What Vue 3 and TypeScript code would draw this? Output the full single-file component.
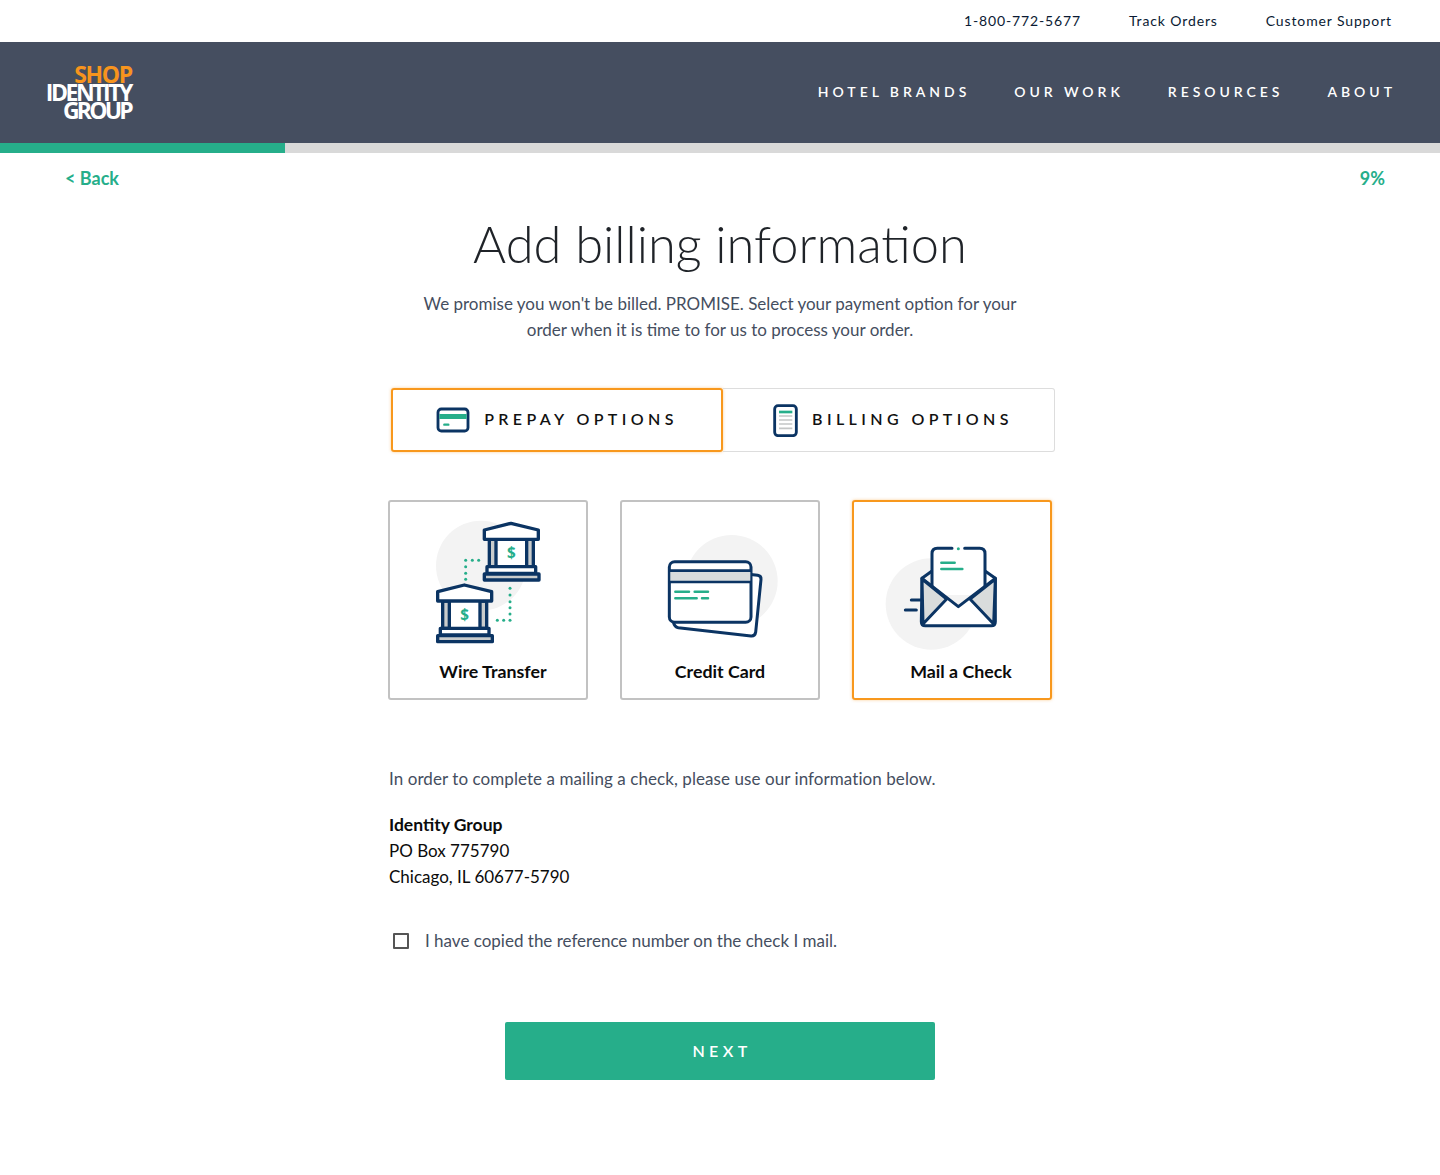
<script setup lang="ts">
const topLinks: string[] = ['1-800-772-5677', 'Track Orders', 'Customer Support']
const navLinks: string[] = ['HOTEL BRANDS', 'OUR WORK', 'RESOURCES', 'ABOUT']
</script>

<template>
  <div class="page">
    <div class="topbar">
      <a v-for="l in topLinks" :key="l" class="toplink">{{ l }}</a>
    </div>
    <header class="header">
      <div class="logo">
        <span class="l1">SHOP</span>
        <span class="l2">IDENTITY</span>
        <span class="l3">GROUP</span>
      </div>
      <nav class="nav">
        <a v-for="l in navLinks" :key="l" class="navlink">{{ l }}</a>
      </nav>
    </header>
    <div class="progress"><div class="progress-fill"></div></div>
    <div class="backrow">
      <a class="back">&lt; Back</a>
      <span class="pct">9%</span>
    </div>
    <main class="main">
      <h1 class="title">Add billing information</h1>
      <p class="lead">We promise you won't be billed. PROMISE. Select your payment option for your<br />order when it is time to for us to process your order.</p>

      <div class="tabs">
        <div class="tab active">
          <svg class="tabicon" width="34" height="26" viewBox="150 81 102 78">
            <rect x="156" y="87" width="90" height="66" rx="10" fill="#fff" stroke="#0b3463" stroke-width="8.5" />
            <rect x="160" y="102" width="82" height="15" fill="#26ae8a" />
            <path d="M175 134H187" stroke="#26ae8a" stroke-width="7" stroke-linecap="round" />
          </svg>
          <span class="tablabel">PREPAY OPTIONS</span>
        </div>
        <div class="tab second">
          <svg class="tabicon" width="25" height="33" viewBox="157 70 75 99">
            <rect x="162" y="75" width="65" height="90" rx="10" fill="#fff" stroke="#0b3463" stroke-width="8.5" />
            <path d="M175 94H215" stroke="#26ae8a" stroke-width="8" />
            <path d="M175 106H215M175 118H215M175 130H215M175 143H215" stroke="#c4c6c6" stroke-width="5" />
          </svg>
          <span class="tablabel">BILLING OPTIONS</span>
        </div>
      </div>

      <div class="cards">
        <div class="card">
          <svg class="cardart" viewBox="15 21 588 450">
            <circle cx="288" cy="212" r="135" fill="#f3f3f3" />
            <g fill="#26ae8a">
              <circle cx="242" cy="196" r="4.5" /><circle cx="262" cy="196" r="4.5" /><circle cx="281" cy="196" r="4.5" />
              <circle cx="242" cy="215" r="4.5" /><circle cx="242" cy="235" r="4.5" /><circle cx="242" cy="253" r="4.5" />
              <circle cx="375" cy="280" r="4.5" /><circle cx="375" cy="300" r="4.5" /><circle cx="375" cy="320" r="4.5" />
              <circle cx="375" cy="338" r="4.5" /><circle cx="375" cy="357" r="4.5" /><circle cx="375" cy="376" r="4.5" />
              <circle cx="356" cy="376" r="4.5" /><circle cx="337" cy="376" r="4.5" />
            </g>
            <g v-for="(t, i) in ['', 'translate(-140 185)']" :key="i" :transform="t" stroke="#0b3463" stroke-width="10" stroke-linejoin="round">
              <rect x="335" y="133" width="90" height="82" fill="#fff" stroke="none" />
              <rect x="313" y="133" width="20" height="82" fill="#c9cccc" />
              <rect x="425" y="133" width="20" height="82" fill="#c9cccc" />
              <path d="M298 105L378 85L460 105V133H298Z" fill="#fff" />
              <rect x="306" y="215" width="146" height="20" fill="#fff" />
              <rect x="298" y="237" width="164" height="18" fill="#c9cccc" />
              <text x="379" y="190" class="dollar">$</text>
            </g>
          </svg>
          <span class="cardlabel wire">Wire Transfer</span>
        </div>

        <div class="card">
          <svg class="cardart" viewBox="21 21 588 450">
            <circle cx="350" cy="258" r="138" fill="#f3f3f3" />
            <path d="M400 238L428 241Q439 243 438 253L422 412Q420 424 408 423L190 398Q178 396 175 380Z" fill="#fff" stroke="#0b3463" stroke-width="9" stroke-linejoin="round" />
            <rect x="163" y="200" width="245" height="182" rx="16" fill="#fff" stroke="#0b3463" stroke-width="9" />
            <rect x="166" y="228" width="240" height="32" fill="#d9dcdc" />
            <path d="M163 227H408M163 261H408" stroke="#0b3463" stroke-width="8" />
            <path d="M181 290H222M239 290H279M181 310H245M261 310H279" stroke="#26ae8a" stroke-width="7.5" stroke-linecap="round" />
          </svg>
          <span class="cardlabel">Credit Card</span>
        </div>

        <div class="card selected">
          <svg class="cardart" viewBox="18 21 588 450">
            <circle cx="250" cy="327" r="137" fill="#f3f3f3" />
            <g stroke="#0b3463" stroke-width="9" stroke-linecap="round" stroke-linejoin="round" fill="none">
              <path d="M252 228L222 250M411 228L442 250" />
              <path d="M252 300V176Q252 160 268 160H411V300Z" fill="#fff" stroke="none" />
              <path d="M252 275V176Q252 160 268 160H312M350 160H395Q411 160 411 176V275" />
              <path d="M222 250L331 335L442 250V380Q442 392 430 392H232Q220 392 220 380Z" fill="#fff" />
              <path d="M222 252L296 312L225 387Z" fill="#d9dcdc" />
              <path d="M442 252L366 312L437 387Z" fill="#d9dcdc" />
              <path d="M190 315H218M172 345H205" />
            </g>
            <circle cx="331" cy="161" r="4.5" fill="#26ae8a" />
            <path d="M280 203H320M280 222H343" stroke="#26ae8a" stroke-width="7.5" stroke-linecap="round" />
          </svg>
          <span class="cardlabel mail">Mail a Check</span>
        </div>
      </div>

      <p class="info">In order to complete a mailing a check, please use our information below.</p>
      <address class="address">
        <strong>Identity Group</strong><br />PO Box 775790<br />Chicago, IL 60677-5790
      </address>
      <label class="check">
        <span class="box"></span>
        <span>I have copied the reference number on the check I mail.</span>
      </label>
      <button class="next" type="button">NEXT</button>
    </main>
  </div>
</template>

<style>
html, body { margin: 0; background: #fff; }
</style>

<style scoped>
.page {
  min-height: 1175px;
  font-family: "Lato", "Noto Sans", sans-serif;
  color: #454e60;
  background: #fff;
  font-size: 17px;
}
.topbar {
  height: 42px;
  box-sizing: border-box;
  padding: 0 48px 2px 0;
  display: flex;
  justify-content: flex-end;
  align-items: center;
  gap: 48px;
  font-size: 14px;
  letter-spacing: 0.87px;
  color: #0a1a33;
}
.header {
  height: 101px;
  background: #454e60;
  display: flex;
  align-items: center;
  justify-content: space-between;
  padding: 0 48px 2px 47px;
  box-sizing: border-box;
}
.logo {
  display: flex;
  flex-direction: column;
  align-items: flex-end;
  width: 86px;
  font-family: "Open Sans", sans-serif;
  font-weight: 700;
  color: #fff;
  line-height: 18px;
  font-size: 23px;
}
.l1 { color: #f7941d; letter-spacing: -1.3px; margin-right: 1px; }
.l2 { letter-spacing: -2.45px; margin-right: 2px; }
.l3 { letter-spacing: -2.8px; margin-right: 2px; }
.nav { display: flex; gap: 48px; }
.navlink {
  color: #fff;
  font-size: 14px;
  font-weight: 600;
  letter-spacing: 3.95px;
  margin-right: -3.95px;
}
.progress { height: 10px; background: #d9d9d9; }
.progress-fill { width: 285px; height: 100%; background: #26ae8a; }
.backrow {
  display: flex;
  justify-content: space-between;
  padding: 15px 55px 0 65px;
  height: 35px;
  line-height: 20px;
  color: #26ae8a;
  font-weight: 700;
  font-size: 18px;
}
.main {
  width: 664px;
  margin: 0 auto;
  display: flex;
  flex-direction: column;
}
.title {
  margin: 10px 0 0;
  text-align: center;
  font-size: 50.6px;
  line-height: 62px;
  font-weight: 300;
  color: #1f2328;
}
.lead {
  margin: 16px 0 0;
  text-align: center;
  line-height: 26px;
}
.tabs {
  display: flex;
  margin: 45px -3px 0 3px;
  height: 64px;
}
.tab {
  flex: 1;
  display: flex;
  align-items: center;
  justify-content: center;
  gap: 14px;
  box-sizing: border-box;
  border: 1px solid #ddd;
  border-left: 0;
  border-radius: 0 3px 3px 0;
}
.tab.second { padding-left: 9px; }
.tab.active {
  flex: 0 0 332px;
  border: 2px solid #f8981d;
  border-radius: 3px;
  box-shadow: 0 0 3px rgba(248, 152, 29, 0.5);
}
.tablabel {
  font-size: 16px;
  font-weight: 600;
  letter-spacing: 4.4px;
  color: #111;
  line-height: 20px;
  margin-top: -2px;
}
.cards {
  display: flex;
  gap: 32px;
  margin-top: 48px;
}
.card {
  width: 200px;
  height: 200px;
  box-sizing: border-box;
  border: 2px solid #c2c2c2;
  border-radius: 3px;
  display: flex;
  flex-direction: column;
  align-items: center;
}
.card.selected {
  border-color: #f8981d;
  box-shadow: 0 0 3px rgba(248, 152, 29, 0.5);
}
.cardart { width: 196px; height: 150px; display: block; }
.cardlabel {
  margin-top: 8px;
  font-size: 17.8px;
  line-height: 22px;
  font-weight: 700;
  color: #0b0b0b;
}
.cardlabel.wire { margin-left: 10px; }
.cardlabel.mail { margin-left: 18px; }
.dollar {
  font-family: "Open Sans", sans-serif;
  font-size: 46px;
  font-weight: 700;
  fill: #26ae8a;
  stroke: none;
  text-anchor: middle;
}
.info {
  margin: 67px 0 0;
  padding-left: 1px;
  line-height: 24px;
  letter-spacing: 0.07px;
}
.address {
  margin-top: 21px;
  padding-left: 1px;
  font-style: normal;
  line-height: 26px;
  color: #0b0b0b;
}
.address strong { font-weight: 700; font-size: 17.5px; }
.check {
  margin-top: 39px;
  display: flex;
  align-items: center;
  gap: 16px;
  padding-left: 5px;
  line-height: 24px;
}
.box {
  width: 16px;
  height: 16px;
  box-sizing: border-box;
  border: 2px solid #555;
  border-radius: 1px;
}
.next {
  margin: 69px auto 0;
  width: 430px;
  height: 58px;
  padding: 0 0 2px 4px;
  border: 0;
  border-radius: 2px;
  background: #26ae8a;
  color: #fff;
  font-family: inherit;
  font-size: 16px;
  font-weight: 600;
  letter-spacing: 4.4px;
}
</style>
